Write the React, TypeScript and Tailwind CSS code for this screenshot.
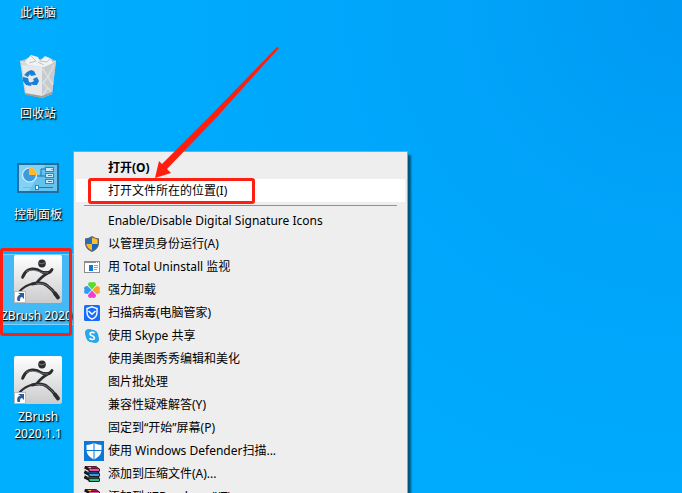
import type { ReactNode } from "react";

function RecycleBin() {
  return (
    <svg viewBox="0 0 48 48" className="h-12 w-12" aria-hidden="true">
      <path d="M6 8 11 41 28 45 38 41 42 8 28 12Z" fill="#d3d8dc" />
      <path d="M28 12 42 8 38 41 28 45Z" fill="#c6cbcf" />
      <path d="M6 8 14 5 22 7 34 4 42 8 30 13 18 11Z" fill="#b4bcc3" />
      <path d="M11 8 17 2 24 4 26 8 31 3 37 6 39 10 30 14 14 12Z" fill="#f1f2f3" />
      <path d="M17 3 22 8 15 10M26 8 33 9 36 6M24 9 30 12" fill="none" stroke="#bdc2c6" />
      <path d="M8 12 12 40 28 43 28 14Z" fill="#e6e8ea" />
      <path d="M28 15 34 24 29 30 37 38M40 12 34 24 39 32M29 42 34 34" fill="none" stroke="#dcdfe1" strokeWidth="1.5" />
      <path d="M11 40 28 43 38 39 38 41 28 45 12 42Z" fill="#a39d98" />
      <path d="M6 8 17 11 28 13 42 8" fill="none" stroke="#f0f2f3" strokeWidth=".7" />
      <g fill="#1c7fd6">
        <path d="M13 19 17 17 20 18 22 22 17 23 16 21 14 24 10 22Z" />
        <path d="M9 24 14 25 15 29 18 30 17 33 12 32 9 28Z" />
        <path d="M19 26 23 24 25 28 23 32 19 32 16 30 20 28Z" />
      </g>
    </svg>
  );
}

function ControlPanel() {
  return (
    <svg viewBox="0 0 48 48" className="h-12 w-12" aria-hidden="true">
      <rect x="3" y="9" width="42" height="30" fill="#1f6fa5" />
      <rect x="5" y="11" width="38" height="26" fill="#63c3ee" />
      <path d="M5 11H31L15 37H5Z" fill="#82d2f5" />
      <circle cx="15.500" cy="21" r="7" fill="#3b9bdd" stroke="#d8f0fc" strokeWidth="1.200" />
      <path d="M15 21V13.500A7.500 7.500 0 0 1 23 21Z" fill="#fdb92b" />
      <path d="M23 22H27V15H31M27 22H31" fill="none" stroke="#1f73ad" />
      <g fill="#c9eafa" stroke="#2f86be">
        <rect x="31.500" y="13.500" width="8" height="4" />
        <rect x="31.500" y="19.500" width="8" height="4" />
        <rect x="31.500" y="25.500" width="8" height="4" />
      </g>
      <path d="M37 15.500H39" stroke="#f08a20" />
      <path d="M34 21.500H38M34 27.500H38" stroke="#2f86be" />
      <path d="M9 33.500H22" stroke="#f29a2e" />
      <path d="M22 33.500H39" stroke="#1f78b5" />
      <rect x="21.500" y="31.500" width="3" height="4" fill="#fff" stroke="#1f86cc" />
    </svg>
  );
}

function ZBrush() {
  return (
    <svg viewBox="0 0 48 48" className="h-12 w-12" aria-hidden="true">
      <defs>
        <linearGradient id="tile" x1="0" y1="0" x2="0" y2="1">
          <stop offset="0" stopColor="#ffffff" />
          <stop offset="1" stopColor="#cbcbcd" />
        </linearGradient>
      </defs>
      <rect width="48" height="48" rx="2" fill="url(#tile)" />
      <ellipse cx="28" cy="8.500" rx="3.800" ry="4" fill="#2b2d31" />
      <path d="M25 8Q28 10 31 7.500" fill="none" stroke="#85898e" strokeWidth=".8" />
      <g fill="none" stroke="#2b2d31" strokeLinecap="round" strokeLinejoin="round">
        <path d="M9 21Q12 14.500 18 14Q23 13.500 27 16.500Q31 19 36 17" strokeWidth="2.800" />
        <path d="M8.500 22.500 10.500 19" strokeWidth="2.600" />
        <path d="M30 17.500Q36 19 38 14.500" strokeWidth="3" />
        <path d="M34 18Q28 21 22.500 28" strokeWidth="2.600" />
        <path d="M5.500 36.500Q11 30 20 28.500" strokeWidth="2" />
        <path d="M18 29Q28 26.500 33 30.500Q38 34 42 40" strokeWidth="3" />
        <path d="M41 38.500 44 42.500" strokeWidth="3.800" />
      </g>
      <path d="M12 16.500Q17 13.500 23 16T34 18M22 28.500Q31 28 35 32L40 37" fill="none" stroke="#777b81" strokeWidth=".8" />
      <rect x=".5" y="36.500" width="11" height="11" fill="#fff" stroke="#b8bcc0" />
      <path d="M3.500 46C2.500 42 4 40 6.500 39.500L4 38H10V44L8 42C6 42 6 44 6 46Z" fill="#2b5c9e" />
    </svg>
  );
}

function Shortcut({ icon, label, selected = false }: { icon?: ReactNode; label: string; selected?: boolean }) {
  return (
    <li className="h-[101px]">
      <button
        className={
          "flex w-full flex-col items-center gap-1 text-xs leading-[17px] text-white [text-shadow:1px_1px_1px_#000000,1px_1px_2px_#000000cc] " +
          (selected ? "h-[69px] bg-[#45b9f5] shadow-[0_-1px_0_#7fd0fa,0_1px_0_#7fd0fa]" : "")
        }
      >
        <span className="h-12 w-12 shrink-0">{icon}</span>
        <span className={selected ? "w-full text-left whitespace-nowrap" : "w-16 text-center"}>{label}</span>
      </button>
    </li>
  );
}

function UacShield() {
  return (
    <svg viewBox="0 0 16 16" className="h-4 w-4" aria-hidden="true">
      <path d="M8 0Q11 2 15 2.500V7C15 11 12 14.500 8 16C4 14.500 1 11 1 7V2.500Q5 2 8 0Z" fill="#5b6067" />
      <path d="M8 1.500V8H2.400V3.600Z" fill="#1e72cf" />
      <path d="M8 1.500 13.600 3.600V8H8Z" fill="#fdc12d" />
      <path d="M2.400 8H8V14.500C4.700 13 2.600 11 2.400 8Z" fill="#fdb825" />
      <path d="M8 8H13.600C13.400 11 11.500 13 8 14.500Z" fill="#1766bd" />
    </svg>
  );
}

function WindowIcon() {
  return (
    <svg viewBox="0 0 16 16" className="h-4 w-4" aria-hidden="true">
      <rect x=".5" y="2.500" width="15" height="11" fill="#fff" stroke="#8a8d90" />
      <path d="M0 3.500H16" stroke="#8a8d90" />
      <rect x="5" y="6" width="4" height="6" fill="#0a78d7" />
      <path d="M10 6.500H14M10 8.500H14M10 10.500H13" stroke="#a1a4a7" />
      <path d="M12 3.500H15" stroke="#fff" strokeDasharray="1 1" />
    </svg>
  );
}

function Clover() {
  return (
    <svg viewBox="0 0 16 16" className="h-4 w-4" aria-hidden="true">
      <path d="M8 7.500 4 3Q4 0 6.500 0L8 .6 9.500 0Q12 0 12 3Z" fill="#55dc2c" />
      <path d="M8.500 8 12.500 4Q16 4 16 6.500L15.400 8 16 9.500Q16 12 12.500 12Z" fill="#fba32b" />
      <path d="M8 8.500 12 13Q12 16 9.500 16L8 15.400 6.500 16Q4 16 4 13Z" fill="#ee3fd2" />
      <path d="M7.500 8 3.500 12Q0 12 0 9.500L.6 8 0 6.500Q0 4 3.500 4Z" fill="#2c9cf2" />
    </svg>
  );
}

function PcManager() {
  return (
    <svg viewBox="0 0 16 16" className="h-4 w-4" aria-hidden="true">
      <rect width="16" height="16" rx="1.500" fill="#176dfb" />
      <path d="M8 1.800 13 3.500V7.500C13 10.800 11 12.900 8 14.200C5 12.900 3 10.800 3 7.500V3.500Z" fill="none" stroke="#fff" strokeWidth="1.400" />
      <path d="M4.500 6 8 9.300 11.500 6" fill="none" stroke="#fff" strokeWidth="1.500" />
    </svg>
  );
}

function Skype() {
  return (
    <svg viewBox="0 0 16 16" className="h-4 w-4" aria-hidden="true">
      <circle cx="8" cy="8" r="6.300" fill="#28a8ea" />
      <circle cx="5" cy="5" r="4" fill="#28a8ea" />
      <circle cx="11" cy="11" r="4" fill="#28a8ea" />
      <path d="M10.500 5.300C9.500 3.800 6 4 6 6C6 8.200 10.400 7.300 10.400 9.800C10.400 12 6.500 12 5.500 10.200" fill="none" stroke="#fff" strokeWidth="1.600" />
    </svg>
  );
}

function Defender() {
  return (
    <svg viewBox="0 0 20 20" className="h-5 w-5" aria-hidden="true">
      <rect width="20" height="20" fill="#0a78d7" />
      <path d="M10 2Q14 4 17.500 4V9C17.500 13.500 14 16.500 10 18.500C6 16.500 2.500 13.500 2.500 9V4Q6 4 10 2Z" fill="#fff" />
      <path d="M10 2V19M2 9.500H18" stroke="#0a78d7" />
    </svg>
  );
}

function WinRar() {
  return (
    <svg viewBox="0 0 16 16" className="h-4 w-4" aria-hidden="true">
      <path d="M1 0H12L16 3V5L15 6 16 8V10L15 11 16 13V15L15 16H5L0 13V11L1 10 0 8V6L1 5 0 3Z" fill="#191919" />
      <path d="M2 .5H12L15 2.500H5Z" fill="#9c1a50" />
      <path d="M5 3H15V5H6Z" fill="#e354a4" />
      <path d="M1 5.500 5 7.500H15L13 6H2Z" fill="#15467c" />
      <path d="M5 8H15V10H6Z" fill="#3e9ae2" />
      <path d="M1 10.500 5 12.500H15L13 11H2Z" fill="#0c5c49" />
      <path d="M5 13H15V15H6Z" fill="#2dbf95" />
      <path d="M0 3 4.500 5.500M0 8 4.500 10.500M0 13 4.500 15.500" stroke="#f2f2f2" strokeWidth="1.300" />
      <path d="M4 1H7V2.200H5Z" fill="#f5c52c" />
    </svg>
  );
}

type Item = { label: string; icon?: ReactNode; bold?: boolean; active?: boolean };

const openItems: Item[] = [
  { label: "打开(O)", bold: true },
  { label: "打开文件所在的位置(I)", active: true },
];

const toolItems: Item[] = [
  { label: "Enable/Disable Digital Signature Icons" },
  { label: "以管理员身份运行(A)", icon: <UacShield /> },
  { label: "用 Total Uninstall 监视", icon: <WindowIcon /> },
  { label: "强力卸载", icon: <Clover /> },
  { label: "扫描病毒(电脑管家)", icon: <PcManager /> },
  { label: "使用 Skype 共享", icon: <Skype /> },
  { label: "使用美图秀秀编辑和美化" },
  { label: "图片批处理" },
  { label: "兼容性疑难解答(Y)" },
  { label: "固定到“开始”屏幕(P)" },
  { label: "使用 Windows Defender扫描...", icon: <Defender /> },
  { label: "添加到压缩文件(A)...", icon: <WinRar /> },
  { label: "添加到 \"ZBrush.rar\"(T)", icon: <WinRar /> },
];

function MenuItem({ label, icon, bold, active }: Item) {
  return (
    <li>
      <button
        className={
          "flex h-[23px] w-full items-center pl-2 text-left whitespace-nowrap " +
          (active ? "bg-white " : "") +
          (bold ? "font-bold" : "")
        }
      >
        <span className="w-6 shrink-0">{icon}</span>
        <span>{label}</span>
      </button>
    </li>
  );
}

export default function App() {
  return (
    <main className="relative h-screen overflow-hidden bg-[radial-gradient(circle_at_100%_0%,#0099f3_0%,#00a5fa_30%,#00aafd_60%,#00b0ff_100%)] font-['Noto_Sans','Noto_Sans_CJK_SC',sans-serif]">
      <ul className="-mt-12 ml-px w-[74px]">
        <Shortcut label="此电脑" />
        <Shortcut label="回收站" icon={<RecycleBin />} />
        <Shortcut label="控制面板" icon={<ControlPanel />} />
        <Shortcut label="ZBrush 2020" icon={<ZBrush />} selected />
        <Shortcut label="ZBrush 2020.1.1" icon={<ZBrush />} />
      </ul>

      <nav className="absolute top-[151px] left-[73px] w-[335px] border border-[#a0a0a0] bg-[#eeeeee] px-0.5 pt-1 text-xs text-black shadow-[3px_4px_2px_#00000080]">
        <ul>
          {openItems.map((item) => (
            <MenuItem key={item.label} {...item} />
          ))}
        </ul>
        <hr className="mx-2 my-[3px] border-[#919191]" />
        <ul>
          {toolItems.map((item) => (
            <MenuItem key={item.label} {...item} />
          ))}
        </ul>
      </nav>

      <div className="absolute top-[178px] left-[88px] h-[26px] w-[167px] rounded-[3px] border-3 border-[#ff1f10]" />
      <div className="absolute top-[248px] left-0 h-[88px] w-[72px] rounded-[3px] border-3 border-[#ff1f10]" />
      <svg viewBox="0 0 130 135" className="absolute top-[45px] left-[153px] h-[135px] w-[130px]" aria-hidden="true">
        <path d="M124 2 126 3 63 73 14 124 18 128 2 133 6 116 9 119 58 70Z" fill="#ff1f10" />
      </svg>
    </main>
  );
}
